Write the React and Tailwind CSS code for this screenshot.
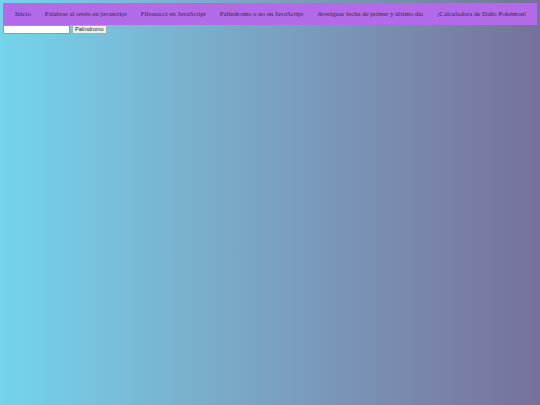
export default function App() {
  const links = [
    'Inicio',
    'Palabras al revés en javascript',
    'Fibonacci en JavaScript',
    'Palíndromo o no en JavaScript',
    'Averiguar fecha de primer y último día',
    '¡Calculadora de Daño Pokémon!',
  ];
  return (
    <div className="w-[540px] h-[405px] bg-gradient-to-r from-[#73d4ec] to-[#76719a] p-[3px] font-['Liberation_Serif',serif]">
      <nav className="h-[22px] bg-[#b36ae8] flex items-center pl-[5px]">
        {links.map((l) => (
          <a key={l} className="px-[7px] text-[6.8px] text-[#33284a] whitespace-nowrap">
            {l}
          </a>
        ))}
      </nav>
      <div className="flex items-center gap-[2px]">
        <input className="w-[67px] h-[9px] bg-white border border-[#999] outline-none" />
        <button className="h-[9px] px-[2px] bg-[#efefef] border border-[#aaa] text-[5.6px] leading-none font-['Liberation_Sans',sans-serif] text-[#222]">
          Palíndromo
        </button>
      </div>
    </div>
  );
}
